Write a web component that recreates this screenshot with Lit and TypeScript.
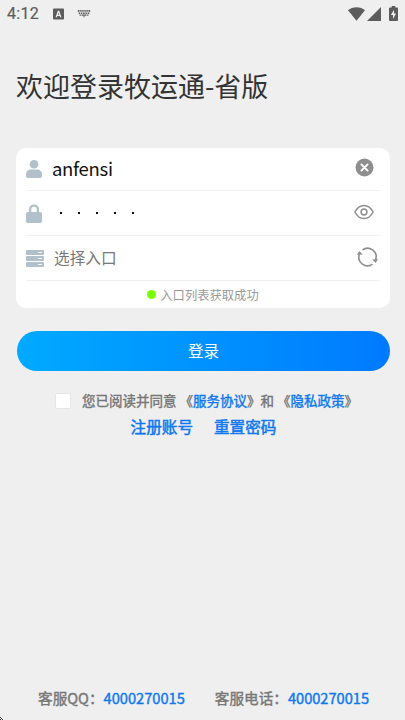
import { LitElement, html, css } from 'lit';
import { customElement, property } from 'lit/decorators.js';

@customElement('status-bar')
export class StatusBar extends LitElement {
  static override styles = css`
    :host {
      display: flex;
      align-items: center;
      height: 28px;
      padding: 0 7px 0 7px;
      color: #5c5c5c;
    }

    .time {
      width: 46px;
      font: 400 16px/28px Roboto, sans-serif;
      letter-spacing: 0.3px;
      -webkit-text-stroke: 0.2px;
    }

    .spacer {
      flex: 1;
    }

    svg {
      display: block;
      margin-bottom: 1px;
      fill: currentColor;
    }

    .keyboard {
      margin-left: 13px;
    }

    .signal {
      margin: 0 8px 1px 2px;
    }
  `;

  override render() {
    return html`
      <span class="time">4:12</span>
      <svg width="11" height="12" viewBox="0 0 12 12">
        <path fill-rule="evenodd" d="M1 0h10a1 1 0 0 1 1 1v10a1 1 0 0 1-1 1H1a1 1 0 0 1-1-1V1a1 1 0 0 1 1-1zM5.200 2.500 2.800 9.500h1.500l.4-1.400h2.600l.4 1.400h1.500L6.800 2.500zM6 4.300l.8 2.600H5.200z" />
      </svg>
      <svg class="keyboard" width="14" height="8" viewBox="0 0 14 9">
        <path d="M0 0h2v2H0zM2.700 0h1.600v2H2.700zM5 0h1.600v2H5zM7.400 0H9v2H7.400zM9.700 0h1.600v2H9.700zM12 0h2v2h-2zM1 2.700h1.700v1.700H1zM3.500 2.700h1.600v1.700H3.500zM5.900 2.700h1.900v1.700H5.900zM8.600 2.700h1.700v1.700H8.600zM11.100 2.700H13v1.700h-1.900zM2 5h1.500v1.500H2zM4.200 5h5.600v1.500H4.200zM10.500 5H12v1.500h-1.500zM5.500 7.200h3L7 8.500z" />
      </svg>
      <span class="spacer"></span>
      <svg width="17" height="14" viewBox="0 0 17 14">
        <path d="M0 3.300Q3.500.3 8.500.3T17 3.300L8.500 13.700z" />
      </svg>
      <svg class="signal" width="14" height="14" viewBox="0 0 14 14">
        <path d="M14 0v14H0z" />
      </svg>
      <svg width="9" height="15" viewBox="0 0 9 15">
        <path fill-rule="evenodd" d="M2.700 0h3.600v1.400H8a1 1 0 0 1 1 1V14a1 1 0 0 1-1 1H1a1 1 0 0 1-1-1V2.400a1 1 0 0 1 1-1h1.700zM5 3.800 1.900 8.900H4V12.900l3.100-5.500H5z" />
      </svg>
    `;
  }
}

@customElement('contact-item')
export class ContactItem extends LitElement {
  static override styles = css`
    :host {
      display: block;
      white-space: nowrap;
      color: #777;
    }

    .number {
      color: #0f78f0;
    }
  `;

  @property({ type: String })
  label = '';

  @property({ type: String })
  number = '';

  override render() {
    return html`${this.label}<span class="number">${this.number}</span>`;
  }
}

@customElement('app-root')
export class AppRoot extends LitElement {
  static override styles = css`
    :host {
      display: flex;
      flex-direction: column;
      position: relative;
      box-sizing: border-box;
      height: 720px;
      overflow: hidden;
      background: #efefef;
      color: #333;
      font-family: 'Noto Sans CJK SC', sans-serif;
    }

    h1 {
      margin: 38px 16px 0;
      font-size: 27px;
      font-weight: 400;
      line-height: 40px;
    }

    .card {
      box-sizing: border-box;
      height: 160px;
      margin: 42px 15px 0 16px;
      padding: 0 10px;
      border-radius: 10px;
      background: #fff;
    }

    .row {
      display: flex;
      align-items: center;
      box-sizing: border-box;
      height: 45px;
      border-bottom: 1px solid #f0f0f0;
    }

    .row.first {
      height: 43px;
    }

    svg {
      display: block;
      flex: none;
    }

    .lead {
      fill: #b0c1cb;
    }

    .value {
      flex: 1;
      margin: 0 0 2px 10px;
      color: #111;
      font-size: 18.500px;
      letter-spacing: -0.300px;
      line-height: 28px;
    }

    .dots {
      display: flex;
      flex: 1;
      gap: 16px;
      margin-left: 18px;
    }

    .dot {
      width: 2px;
      height: 2px;
      background: #111;
    }

    .placeholder {
      flex: 1;
      margin: 0 0 1px 10px;
      color: #777;
      font-size: 15.700px;
      line-height: 24px;
    }

    .clear {
      margin: 0 6px 4px 0;
    }

    .eye {
      margin: 0 6px 3px 0;
    }

    .refresh {
      margin: 0 2px 3px 0;
    }

    .notice {
      display: flex;
      align-items: center;
      justify-content: center;
      gap: 4px;
      height: 27px;
      color: #999;
      font-size: 12.300px;
    }

    .online {
      width: 9px;
      height: 9px;
      border-radius: 50%;
      background: #76ff03;
    }

    .login {
      box-sizing: border-box;
      height: 40px;
      margin: 23px 15px 0 17px;
      padding: 0 0 2px;
      border: 0;
      border-radius: 20px;
      background: linear-gradient(90deg, #00aaff, #007aff);
      color: #fff;
      font-family: inherit;
      font-size: 15.600px;
    }

    .agreement {
      display: flex;
      align-items: center;
      height: 20px;
      margin: 19px 0 0 55px;
      color: #777;
      font-size: 13.500px;
      white-space: pre;
      -webkit-text-stroke: 0.400px;
    }

    .checkbox {
      box-sizing: border-box;
      width: 16px;
      height: 16px;
      margin: 1px 11px 0 0;
      border: 1px solid #e6e6e6;
      border-radius: 2px;
      background: #fff;
    }

    .link {
      color: #0f78f0;
    }

    .links {
      display: flex;
      justify-content: center;
      gap: 21px;
      margin-top: 4px;
      padding-left: 2px;
      font-size: 15.600px;
      line-height: 24px;
      -webkit-text-stroke: 0.500px;
    }

    .contacts {
      display: flex;
      gap: 30px;
      margin: auto 0 11px 38px;
      font-size: 14.630px;
      line-height: 22px;
      -webkit-text-stroke: 0.400px;
    }

    .corner {
      position: absolute;
      left: 0;
      bottom: 0;
    }
  `;

  override render() {
    return html`
      <status-bar></status-bar>
      <h1>欢迎登录牧运通-省版</h1>

      <div class="card">
        <div class="row first">
          <svg class="lead" width="16" height="18" viewBox="0 0 16 18">
            <circle cx="8" cy="4.300" r="4.300" />
            <path d="M0 16v-1.500C0 11.500 2 9.500 5 9.500h6c3 0 5 2 5 5V16c0 1.300-.7 2-2 2H2c-1.300 0-2-.7-2-2z" />
          </svg>
          <span class="value">anfensi</span>
          <svg class="clear" width="19" height="19" viewBox="0 0 19 19">
            <circle cx="9.500" cy="9.500" r="9" fill="#8e8e8e" />
            <path d="m6.400 6.400 6.200 6.200m0-6.200-6.200 6.200" stroke="#fff" stroke-width="1.900" stroke-linecap="round" />
          </svg>
        </div>

        <div class="row">
          <svg class="lead" width="16" height="19" viewBox="0 0 16 19">
            <path fill-rule="evenodd" d="M3 8V5.400a5 5 0 0 1 10 0V8h1c1.300 0 2 .7 2 2v7c0 1.300-.7 2-2 2H2c-1.300 0-2-.7-2-2v-7c0-1.300.7-2 2-2zm2.300 0h5.400V5.400a2.700 2.700 0 0 0-5.400 0z" />
          </svg>
          <span class="dots">
            ${Array.from({ length: 5 }, () => html`<span class="dot"></span>`)}
          </span>
          <svg class="eye" width="20" height="16" viewBox="0 0 20 16" fill="none" stroke="#8e8e8e" stroke-width="1.500">
            <path d="M.9 8C3 3.900 6.200 1.400 10 1.400S17 3.900 19.100 8C17 12.100 13.800 14.600 10 14.600S3 12.100.9 8z" />
            <circle cx="10" cy="8" r="2.900" />
          </svg>
        </div>

        <div class="row">
          <svg class="lead" width="18" height="17" viewBox="0 0 18 17">
            <rect width="18" height="5" rx="1" />
            <rect y="6" width="18" height="5" rx="1" />
            <rect y="12" width="18" height="5" rx="1" />
            <path d="M12 2.500h4m-4 6h4m-4 6h4" stroke="#fff" stroke-width="1.200" />
          </svg>
          <span class="placeholder">选择入口</span>
          <svg class="refresh" width="21" height="20" viewBox="0 0 21 20" fill="none" stroke="#8e8e8e" stroke-width="1.600">
            <path d="M5.500 2.900A8.600 8.600 0 0 1 18.700 12.500M15.500 17.100A8.600 8.600 0 0 1 2.300 7.500" />
            <path d="m0 8 2.300-3.900L5.700 7.600zM21 12l-2.300 3.900-3.400-3.500z" fill="#8e8e8e" stroke="none" />
          </svg>
        </div>

        <div class="notice"><span class="online"></span>入口列表获取成功</div>
      </div>

      <button class="login">登录</button>

      <div class="agreement"><span class="checkbox"></span>您已阅读并同意 《<span class="link">服务协议</span>》和 《<span class="link">隐私政策</span>》</div>
      <div class="links">
        <span class="link">注册账号</span>
        <span class="link">重置密码</span>
      </div>

      <div class="contacts">
        <contact-item label="客服QQ：" number="4000270015"></contact-item>
        <contact-item label="客服电话：" number="4000270015"></contact-item>
      </div>

      <svg class="corner" width="3" height="4" viewBox="0 0 3 4">
        <path d="M0 1h1v1H0zM1 2h1v1H1zM2 3h1v1H2zM0 3h1v1H0z" fill="#444" />
      </svg>
    `;
  }
}

declare global {
  interface HTMLElementTagNameMap {
    'status-bar': StatusBar;
    'contact-item': ContactItem;
    'app-root': AppRoot;
  }
}
